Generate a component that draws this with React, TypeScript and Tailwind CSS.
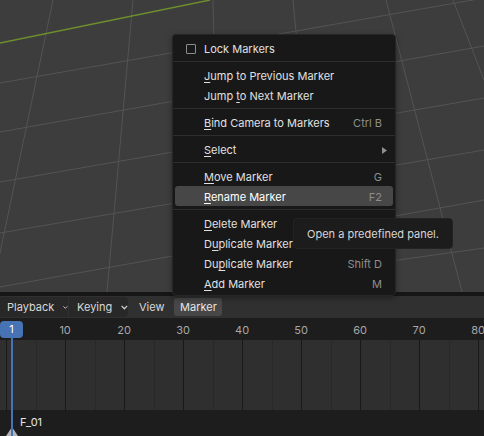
import React from "react";

type MenuItem =
  | { kind: "sep" }
  | {
      kind: "item";
      label: string;
      ul?: number; // index of the mnemonic letter
      shortcut?: string;
      check?: boolean;
      submenu?: boolean;
      active?: boolean;
    };

const menu: MenuItem[] = [
  { kind: "item", label: "Lock Markers", check: true },
  { kind: "sep" },
  { kind: "item", label: "Jump to Previous Marker", ul: 0 },
  { kind: "item", label: "Jump to Next Marker", ul: 5 },
  { kind: "sep" },
  { kind: "item", label: "Bind Camera to Markers", ul: 0, shortcut: "Ctrl B" },
  { kind: "sep" },
  { kind: "item", label: "Select", ul: 0, submenu: true },
  { kind: "sep" },
  { kind: "item", label: "Move Marker", ul: 0, shortcut: "G" },
  { kind: "item", label: "Rename Marker", ul: 0, shortcut: "F2", active: true },
  { kind: "sep" },
  { kind: "item", label: "Delete Marker", ul: 0 },
  { kind: "item", label: "Duplicate Marker", ul: 1 },
  { kind: "item", label: "Duplicate Marker", ul: 2, shortcut: "Shift D" },
  { kind: "item", label: "Add Marker", ul: 0, shortcut: "M" },
];

const frameX = (f: number) => 12 + (f - 1) * 5.9;

function Label({ text, ul }: { text: string; ul?: number }) {
  if (ul === undefined) return <span>{text}</span>;
  return (
    <span>
      {text.slice(0, ul)}
      <span className="underline underline-offset-2">{text[ul]}</span>
      {text.slice(ul + 1)}
    </span>
  );
}

function Viewport() {
  // perspective floor grid
  const lines: [number, number, number, number][] = [
    [53, 0, 0, 253],
    [133, 0, 107, 292],
    [213, 0, 220, 292],
    [293, 0, 320, 292],
    [386, 0, 462, 292],
    [453, 0, 484, 80],
    [0, 83, 484, -2],
    [0, 132, 484, 46],
    [0, 182, 484, 98],
    [0, 233, 484, 150],
    [0, 287, 484, 200],
    [170, 292, 484, 248],
  ];
  return (
    <div className="relative h-[292px] bg-[#3d3d3d]">
      <svg width="484" height="292" className="absolute inset-0">
        {lines.map(([x1, y1, x2, y2], i) => (
          <line key={i} x1={x1} y1={y1} x2={x2} y2={y2} stroke="#545454" strokeWidth="1" />
        ))}
        <line x1="0" y1="43" x2="210" y2="0" stroke="#6e8f2c" strokeWidth="1.4" />
      </svg>
    </div>
  );
}

function Chevron() {
  return (
    <svg width="7" height="5" viewBox="0 0 7 5" className="ml-[9px] mt-px">
      <path d="M0.6 0.8 L3.5 3.8 L6.4 0.8" fill="none" stroke="#d0d0d0" strokeWidth="1.3" />
    </svg>
  );
}

function Header() {
  return (
    <div className="flex h-[22px] items-center bg-[#303030] text-[11px] text-[#d8d8d8]">
      <div className="flex h-[20px] w-[68px] items-center bg-[#282828] pl-[7px]">
        Playback
        <Chevron />
      </div>
      <div className="ml-px flex h-[20px] w-[59px] items-center rounded-r-[4px] bg-[#282828] pl-[8px]">
        Keying
        <Chevron />
      </div>
      <div className="ml-[11px]">View</div>
      <div className="ml-[10px] flex h-[18px] w-[48px] items-center justify-center rounded-[3px] bg-[#474747] text-[#e6e6e6]">
        Marker
      </div>
    </div>
  );
}

function Timeline() {
  const labels = [10, 20, 30, 40, 50, 60, 70, 80];
  const ticks: number[] = [];
  for (let f = 0; f <= 85; f += 5) ticks.push(f);
  return (
    <div className="relative">
      <Header />
      <div className="relative h-[22px] bg-[#1d1d1d] text-[11px] text-[#a8a8a8]">
        {labels.map((f) => (
          <span
            key={f}
            className="absolute top-[4px] -translate-x-1/2"
            style={{ left: frameX(f) }}
          >
            {f}
          </span>
        ))}
      </div>
      <div className="relative h-[70px] bg-[#2f2f2f]">
        <svg width="484" height="70" className="absolute inset-0">
          {ticks.map((f) => (
            <line
              key={f}
              x1={Math.round(frameX(f)) + 0.5}
              y1="0"
              x2={Math.round(frameX(f)) + 0.5}
              y2="70"
              stroke={f % 10 === 0 ? "#191919" : "#282828"}
              strokeWidth="1"
            />
          ))}
        </svg>
      </div>
      <div className="relative h-[26px] bg-[#1d1d1d]">
        <span className="absolute left-[20px] top-[4px] text-[11px] text-[#e6e6e6]">F_01</span>
        <svg width="12" height="9" className="absolute left-[6px] top-[17px]">
          <path d="M6 0 L12 9 L0 9 Z" fill="#b4b4b4" />
        </svg>
      </div>

      {/* playhead */}
      <div className="absolute left-[11px] top-[40px] h-[100px] w-[2px] bg-[#4772b3]" />
      <div className="absolute left-0 top-[25px] flex h-[17px] w-[23px] items-center justify-center rounded-[4px] bg-[#4772b3] text-[11px] text-white">
        1
      </div>
    </div>
  );
}

function MarkerMenu() {
  return (
    <div className="absolute left-[172px] top-[34px] w-[224px] rounded-[4px] border border-[#262626] bg-[#181818] pb-[2px] pt-[3px] text-[11px] text-[#e0e0e0] shadow-[0_2px_6px_rgba(0,0,0,0.35)]">
      {menu.map((m, i) =>
        m.kind === "sep" ? (
          <div key={i} className="flex h-[7px] items-center">
            <div className="h-px w-full bg-[#2e2e2e]" />
          </div>
        ) : (
          <div key={i} className="px-[2px]">
            <div
              className={`flex h-[20px] items-center rounded-[3px] pl-[29px] pr-[11px] pt-[2px] ${
                m.active ? "bg-[#474747] text-white" : ""
              }`}
            >
              {m.check && (
                <div className="-ml-[18px] mr-[8px] h-[10px] w-[10px] rounded-[1px] border border-[#8c8c8c]" />
              )}
              <Label text={m.label} ul={m.ul} />
              <div className="flex-1" />
              {m.shortcut && <span className="text-[#8e8e8e]">{m.shortcut}</span>}
              {m.submenu && (
                <svg width="5" height="7" className="-mr-[5px]">
                  <path d="M0 0 L5 3.5 L0 7 Z" fill="#8e8e8e" />
                </svg>
              )}
            </div>
          </div>
        )
      )}
    </div>
  );
}

export default function App() {
  return (
    <div className="relative h-[436px] w-[484px] overflow-hidden bg-[#161616] font-['Inter','DejaVu_Sans',sans-serif]">
      <Viewport />
      <div className="h-[4px]" />
      <Timeline />
      <MarkerMenu />
      <div className="absolute left-[293px] top-[218px] flex h-[31px] items-center rounded-[4px] border border-[#232323] bg-[#1c1c1c] px-[13px] pt-px text-[11px] text-[#d6d6d6]">
        Open a predefined panel.
      </div>
    </div>
  );
}
